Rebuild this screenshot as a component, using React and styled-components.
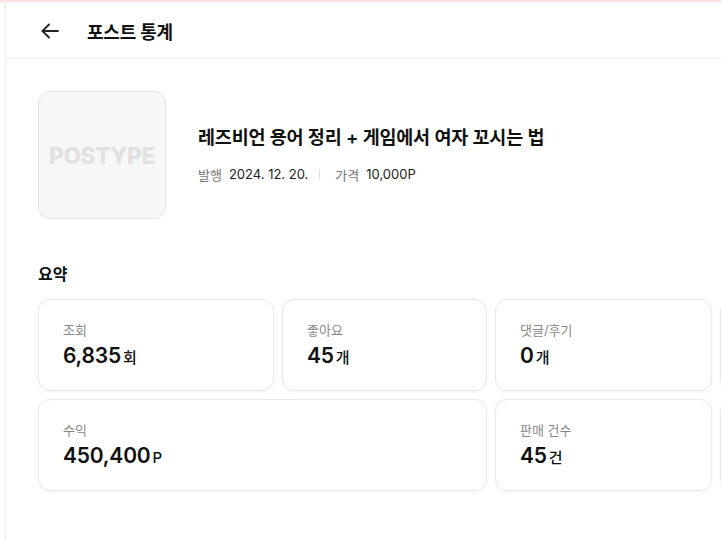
import React from "react";
import styled, { createGlobalStyle } from "styled-components";

const Global = createGlobalStyle`
  html, body { margin: 0; padding: 0; background: #fff; }
  body { font-family: Inter, "Noto Sans CJK KR", sans-serif; color: #111; overflow: hidden; }
`;

const TopStrip = styled.div`
  height: 2px;
  background: #fbe3e3;
  border-bottom: 1px solid #fdf1f1;
`;

const Shell = styled.div`
  display: flex;
  min-height: 537px;
`;

const Rail = styled.div`
  width: 5px;
  flex: none;
  border-right: 1px solid #ececec;
`;

const Main = styled.main`
  flex: 1;
  min-width: 0;
  overflow: hidden;
`;

const Header = styled.header`
  height: 55px;
  display: flex;
  align-items: center;
  gap: 27px;
  padding-left: 34px;
  border-bottom: 1px solid #ececec;
`;

const BackButton = styled.button`
  border: 0;
  background: none;
  padding: 0;
  width: 20px;
  height: 20px;
  display: flex;
  align-items: center;
  justify-content: center;
  color: #222;
  cursor: pointer;
`;

const HeaderTitle = styled.h1`
  margin: 0;
  font-size: 18px;
  font-weight: 700;
  letter-spacing: -0.2px;
  color: #111;
`;

const Content = styled.div`
  padding: 32px 0 0 32px;
`;

const PostRow = styled.section`
  display: flex;
  align-items: center;
  gap: 32px;
`;

const Thumb = styled.div`
  width: 126px;
  height: 126px;
  flex: none;
  border: 1px solid #e6e6e6;
  border-radius: 12px;
  background: #f7f7f7;
  display: flex;
  align-items: center;
  justify-content: center;
  font-family: Inter, sans-serif;
  font-weight: 800;
  font-size: 22.5px;
  color: #e1e1e1;
  letter-spacing: -0.2px;
`;

const PostInfo = styled.div`
  display: flex;
  flex-direction: column;
  gap: 16px;
  margin-top: -4px;
`;

const PostTitle = styled.h2`
  margin: 0;
  font-size: 18.5px;
  font-weight: 600;
  color: #111;
  letter-spacing: -0.2px;
`;

const Meta = styled.div`
  display: flex;
  align-items: center;
  font-size: 13px;
`;

const MetaLabel = styled.span`
  color: #777;
  margin-right: 7px;
`;

const MetaValue = styled.span`
  color: #222;
`;

const Divider = styled.span`
  width: 1px;
  height: 11px;
  background: #e2e2e2;
  margin: 0 15px 0 11px;
`;

const SectionTitle = styled.h3`
  margin: 42px 0 14px;
  font-size: 16px;
  font-weight: 700;
  color: #111;
`;

const Grid = styled.div`
  display: grid;
  grid-template-columns: 236px 205px 217px 236px;
  grid-auto-rows: 92px;
  gap: 8px;
  width: max-content;
`;

const Card = styled.div`
  grid-column: span ${(p) => p.$span || 1};
  border: 1px solid #e9e9e9;
  border-radius: 12px;
  box-shadow: 0 1px 3px rgba(0, 0, 0, 0.05);
  padding: 20px 24px;
  display: flex;
  flex-direction: column;
  gap: 4px;
  box-sizing: border-box;
`;

const CardLabel = styled.span`
  font-size: 13px;
  color: #888;
`;

const CardValue = styled.div`
  display: flex;
  align-items: baseline;
  gap: 2px;
  font-size: 21px;
  font-weight: 600;
  color: #111;
  letter-spacing: -0.2px;
`;

const Unit = styled.span`
  font-size: 15px;
  font-weight: 500;
`;

const ArrowLeft = () => (
  <svg width="20" height="20" viewBox="0 0 20 20" fill="none" stroke="currentColor" strokeWidth="1.8" strokeLinecap="round" strokeLinejoin="round">
    <path d="M18 10H2.5" />
    <path d="M9 3.5L2.5 10L9 16.5" />
  </svg>
);

const stats = [
  { label: "조회", value: "6,835", unit: "회" },
  { label: "좋아요", value: "45", unit: "개" },
  { label: "댓글/후기", value: "0", unit: "개" },
  { label: "", value: "", unit: "" },
  { label: "수익", value: "450,400", unit: "P", span: 2 },
  { label: "판매 건수", value: "45", unit: "건" },
  { label: "", value: "", unit: "" },
];

export default function App() {
  return (
    <>
      <Global />
      <TopStrip />
      <Shell>
        <Rail />
        <Main>
          <Header>
            <BackButton aria-label="뒤로">
              <ArrowLeft />
            </BackButton>
            <HeaderTitle>포스트 통계</HeaderTitle>
          </Header>
          <Content>
            <PostRow>
              <Thumb>POSTYPE</Thumb>
              <PostInfo>
                <PostTitle>레즈비언 용어 정리 + 게임에서 여자 꼬시는 법</PostTitle>
                <Meta>
                  <MetaLabel>발행</MetaLabel>
                  <MetaValue>2024. 12. 20.</MetaValue>
                  <Divider />
                  <MetaLabel>가격</MetaLabel>
                  <MetaValue>10,000P</MetaValue>
                </Meta>
              </PostInfo>
            </PostRow>
            <SectionTitle>요약</SectionTitle>
            <Grid>
              {stats.map((s, i) => (
                <Card key={i} $span={s.span}>
                  {s.label && <CardLabel>{s.label}</CardLabel>}
                  {s.value && (
                    <CardValue>
                      {s.value}
                      <Unit>{s.unit}</Unit>
                    </CardValue>
                  )}
                </Card>
              ))}
            </Grid>
          </Content>
        </Main>
      </Shell>
    </>
  );
}
